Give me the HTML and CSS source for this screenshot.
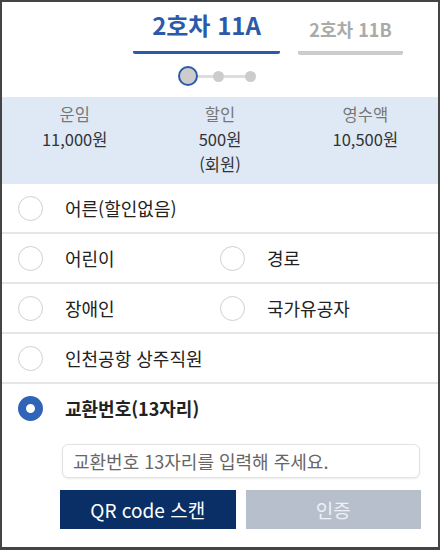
FILE: index.html
```html
<!DOCTYPE html>
<html lang="ko">
<head>
  <meta charset="UTF-8">
  <title>승차권 할인</title>
  <link rel="stylesheet" href="styles.css">
</head>
<body>
  <div class="frame">
    <!-- 호차 탭 -->
    <div class="tabs">
      <div class="tab active">2호차 11A</div>
      <div class="tab">2호차 11B</div>
    </div>

    <!-- 단계 표시 -->
    <div class="steps">
      <span class="step current"></span>
      <span class="bar"></span>
      <span class="step"></span>
      <span class="bar long"></span>
      <span class="step"></span>
    </div>

    <!-- 요금 요약 -->
    <div class="summary">
      <div class="cell">
        <div class="label">운임</div>
        <div class="value">11,000원</div>
      </div>
      <div class="cell">
        <div class="label">할인</div>
        <div class="value">500원<br>(회원)</div>
      </div>
      <div class="cell">
        <div class="label">영수액</div>
        <div class="value">10,500원</div>
      </div>
    </div>

    <!-- 할인 종류 -->
    <div class="options">
      <div class="row">
        <label class="opt"><span class="radio"></span>어른(할인없음)</label>
      </div>
      <div class="row">
        <label class="opt"><span class="radio"></span>어린이</label>
        <label class="opt"><span class="radio"></span>경로</label>
      </div>
      <div class="row">
        <label class="opt"><span class="radio"></span>장애인</label>
        <label class="opt"><span class="radio"></span>국가유공자</label>
      </div>
      <div class="row">
        <label class="opt"><span class="radio"></span>인천공항 상주직원</label>
      </div>
      <div class="row last">
        <label class="opt checked"><span class="radio"></span>교환번호(13자리)</label>
      </div>
    </div>

    <div class="exchange">
      <input class="code-input" type="text" placeholder="교환번호 13자리를 입력해 주세요.">
      <div class="buttons">
        <button class="btn primary">QR code 스캔</button>
        <button class="btn disabled">인증</button>
      </div>
    </div>
  </div>
</body>
</html>
```

FILE: styles.css
```css
/* 기본 */
html, body { margin: 0; padding: 0; background: #fff; }
body { font-family: "Noto Sans CJK KR", "Noto Sans", sans-serif; color: #222; }
.frame { width: 440px; height: 550px; box-sizing: border-box; border: 2px solid #444; border-bottom-width: 3px; overflow: hidden; }

/* 탭 */
.tabs { display: flex; gap: 18px; padding-left: 131px; height: 53px; align-items: flex-end; }
.tab { width: 105px; text-align: center; font-size: 18px; font-weight: 700; color: #aaa; line-height: 26px; padding-bottom: 9px; border-bottom: 4px solid #ccc; border-radius: 0 0 2px 2px; }
.tab.active { width: 147px; font-size: 24px; color: #2c5aa8; line-height: 32px; padding-bottom: 10px; border-bottom: 3px solid #2c5aa8; margin-bottom: 1px; }

/* 단계 */
.steps { display: flex; align-items: center; padding-left: 176px; height: 42px; }
.step { width: 11px; height: 11px; border-radius: 50%; background: #ccc; }
.step.current { width: 16px; height: 16px; border: 2.5px solid #2c5aa8; }
.bar { width: 15px; height: 3px; background: #ddd; }
.bar.long { width: 21px; }

/* 요금 요약 */
.summary { display: grid; grid-template-columns: repeat(3, 1fr); background: #dfe9f6; height: 87px; padding-top: 5px; box-sizing: border-box; }
.cell { text-align: center; font-size: 16.5px; line-height: 25px; }
.label { color: #777; }
.value { color: #333; }

/* 옵션 */
.row { display: grid; grid-template-columns: 202px 1fr; height: 48px; border-bottom: 2px solid #e6e6e6; padding-left: 16px; }
.row.last { border-bottom: none; }
.opt { display: flex; align-items: center; gap: 22px; font-size: 18px; color: #222; white-space: nowrap; }
.radio { width: 25px; height: 25px; box-sizing: border-box; border: 1.5px solid #d0d0d0; border-radius: 50%; flex: none; }
.opt.checked { font-weight: 700; }
.opt.checked .radio { border: 8.5px solid #2f64b8; background: #fff; }

/* 교환번호 입력 */
.exchange { padding: 12px 17px 0 58px; }
.code-input { display: block; width: 358px; height: 34px; margin-left: 2px; box-sizing: border-box; border: 1px solid #e2e2e2; border-radius: 6px; box-shadow: 0 1px 2px rgba(0,0,0,0.08); padding: 0 10px; font-family: inherit; font-size: 18px; color: #333; outline: none; }
.code-input::placeholder { color: #666; }
.buttons { display: flex; gap: 10px; margin-top: 12px; }
.btn { width: 176px; height: 39px; border: none; font-family: inherit; font-size: 19px; color: #fff; padding: 0; }
.btn.primary { background: #0a2f66; }
.btn.disabled { background: #b6bfcb; color: #eef1f5; }
```
